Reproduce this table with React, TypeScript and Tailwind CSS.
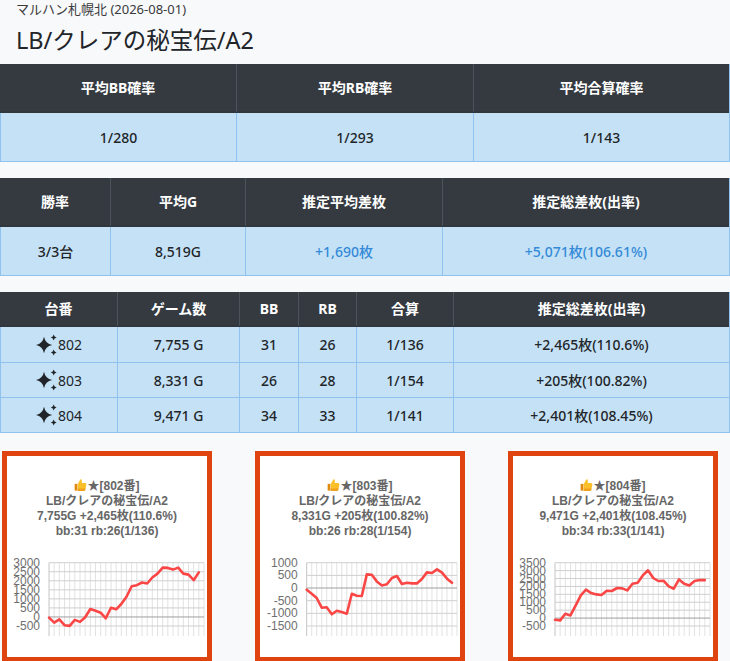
import React from 'react'

type Machine = {
  no: string
  games: string
  bb: number
  rb: number
  total: string
  diff: string
  g: string
  chartDiff: string
  top: number
  bottom: number
  left: number
  data: number[]
}

const MACHINES: Machine[] = [
  {
    no: '802', games: '7,755 G', bb: 31, rb: 26, total: '1/136', diff: '+2,465枚(110.6%)',
    g: '7,755G', chartDiff: '+2,465枚(110.6%)', top: 3000, bottom: -500, left: 42,
    data: [-37, -311, -128, -458, -494, -165, -275, -18, 440, 348, 238, -73, 513, 421, 714, 1117, 1703, 1758, 1905, 1850, 2179, 2399, 2729, 2711, 2619, 2729, 2399, 2344, 2033, 2465],
  },
  {
    no: '803', games: '8,331 G', bb: 26, rb: 28, total: '1/154', diff: '+205枚(100.82%)',
    g: '8,331G', chartDiff: '+205枚(100.82%)', top: 1000, bottom: -1500, left: 46.7,
    data: [-66, -224, -395, -776, -763, -1039, -895, -947, -1013, -224, -303, -316, 539, 526, 263, 105, 145, 395, 474, 158, 211, 184, 184, 355, 618, 592, 737, 605, 368, 205],
  },
  {
    no: '804', games: '9,471 G', bb: 34, rb: 33, total: '1/141', diff: '+2,401枚(108.45%)',
    g: '9,471G', chartDiff: '+2,401枚(108.45%)', top: 3500, bottom: -500, left: 42,
    data: [-105, -148, 274, 169, 802, 1435, 1793, 1582, 1498, 1456, 1730, 1709, 1899, 1878, 1751, 2173, 2236, 2700, 3017, 2532, 2342, 2363, 2004, 1857, 2447, 2173, 2068, 2342, 2405, 2401],
  },
]

function Sparkles() {
  return (
    <svg width="21" height="22" viewBox="0 0 21 22" className="shrink-0">
      <path d="M8 2.8Q9.3 9.7 16.2 11Q9.3 12.3 8 19.2Q6.7 12.3 -0.2 11Q6.7 9.7 8 2.8Z" fill="#212529" />
      <path d="M17.7 0.6Q18.1 3.1 20.6 3.5Q18.1 3.9 17.7 6.4Q17.3 3.9 14.8 3.5Q17.3 3.1 17.7 0.6Z" fill="#212529" />
      <path d="M17.7 15.6Q18.1 18.1 20.6 18.5Q18.1 18.9 17.7 21.4Q17.3 18.9 14.8 18.5Q17.3 18.1 17.7 15.6Z" fill="#212529" />
    </svg>
  )
}

function ThumbsUp() {
  return (
    <svg width="13" height="13" viewBox="0 0 16 16" className="inline-block align-[-1px]">
      <path d="M0.8 7.2h3.4v8.3H0.8z" fill="#e08a12" />
      <path d="M4.6 7.4 7.6 2.1c.5-.9 2-.6 2 .6v3.4h4.1c1 0 1.7.9 1.5 1.8l-1.1 6c-.2.9-.9 1.5-1.8 1.5H4.6z" fill="#fbbf2a" />
      <path d="M4.6 13h9.6l-.3 1.4c-.2.9-.9 1.5-1.8 1.5H4.6z" fill="#f0a21c" />
    </svg>
  )
}

function Chart({ m }: { m: Machine }) {
  const yTop = 23.7
  const yBot = 87
  const gridBottom = 97
  const right = 197
  const dx = (right - m.left) / 30
  const y = (v: number) => yTop + ((m.top - v) / (m.top - m.bottom)) * (yBot - yTop)
  const levels: number[] = []
  for (let v = m.top; v >= m.bottom; v -= 500) levels.push(v)
  const pts = m.data.map((v, i) => `${(m.left + i * dx).toFixed(1)},${y(v).toFixed(1)}`).join(' ')
  return (
    <svg width="200" height="119" viewBox="0 0 200 119" className="block">
      {Array.from({ length: 31 }, (_, i) => (
        <line key={i} x1={m.left + i * dx} x2={m.left + i * dx} y1={yTop} y2={gridBottom} stroke={i === 0 ? '#c4c4c4' : '#e2e2e2'} strokeWidth="1" />
      ))}
      {levels.map(v => (
        <line key={v} x1={m.left} x2={right} y1={y(v)} y2={y(v)} stroke={v === 0 ? '#9e9e9e' : '#cfcfcf'} strokeWidth="1" />
      ))}
      {levels.map(v => (
        <text key={v} x={m.left - 9} y={y(v)} textAnchor="end" dominantBaseline="central" fontSize="12" fill="#6f6f6f" fontFamily="'Liberation Sans', Arial, sans-serif">
          {v}
        </text>
      ))}
      <polyline points={pts} fill="none" stroke="#fb4646" strokeWidth="2.6" strokeLinejoin="round" strokeLinecap="round" />
    </svg>
  )
}

function ChartCard({ m }: { m: Machine }) {
  return (
    <div className="w-[210px] h-[211px] border-[5px] border-[#df4410] bg-white shrink-0">
      <div className="pt-[22px] text-center text-[12px] leading-[15px] font-bold text-[#666] font-['Liberation_Sans','Noto_Sans_CJK_JP',sans-serif]">
        <p><ThumbsUp />★[{m.no}番]</p>
        <p>LB/クレアの秘宝伝/A2</p>
        <p>{m.g} {m.chartDiff}</p>
        <p>bb:{m.bb} rb:{m.rb}({m.total})</p>
      </div>
      <Chart m={m} />
    </div>
  )
}

const headCell = 'flex items-center justify-center bg-[#343a40] text-white font-bold border-l border-[#4b535b] first:border-l-0'
const bodyCell = 'flex items-center justify-center bg-[#c5e1f5] font-medium border-l border-[#8fc2ee]'
const dark = 'text-[#212529]'
const blue = 'text-[#338ad8]'

export default function App() {
  return (
    <div className="min-h-[661px] bg-[#f8f9fa] font-['Noto_Sans','Noto_Sans_CJK_JP',sans-serif] text-[14px] overflow-hidden">
      <p className="pt-[1px] pl-4 text-[13px] leading-[16px] text-[#3a3a3a]">マルハン札幌北 (2026-08-01)</p>
      <h1 className="mt-[7px] pl-4 text-[23.5px] leading-[32px] text-[#212529]">LB/クレアの秘宝伝/A2</h1>

      <div className="mt-[8px] grid grid-cols-[236px_237px_1fr] border-b border-r border-[#8fc2ee]">
        {['平均BB確率', '平均RB確率', '平均合算確率'].map(h => (
          <div key={h} className={`${headCell} h-[49px] border-b-2 border-b-[#30363b]`}>{h}</div>
        ))}
        {['1/280', '1/293', '1/143'].map(v => (
          <div key={v} className={`${bodyCell} ${dark} h-[48px]`}>{v}</div>
        ))}
      </div>

      <div className="mt-[16px] grid grid-cols-[110px_135px_197px_1fr] border-b border-r border-[#8fc2ee]">
        {['勝率', '平均G', '推定平均差枚', '推定総差枚(出率)'].map(h => (
          <div key={h} className={`${headCell} h-[49px] border-b-2 border-b-[#30363b]`}>{h}</div>
        ))}
        <div className={`${bodyCell} ${dark} h-[48px]`}>3/3台</div>
        <div className={`${bodyCell} ${dark} h-[48px]`}>8,519G</div>
        <div className={`${bodyCell} ${blue} h-[48px]`}>+1,690枚</div>
        <div className={`${bodyCell} ${blue} h-[48px]`}>+5,071枚(106.61%)</div>
      </div>

      <div className="mt-[16px] grid grid-cols-[117px_122px_59px_58px_97px_1fr] border-b border-r border-[#8fc2ee]">
        {['台番', 'ゲーム数', 'BB', 'RB', '合算', '推定総差枚(出率)'].map(h => (
          <div key={h} className={`${headCell} h-[35px] border-b-2 border-b-[#30363b]`}>{h}</div>
        ))}
        {MACHINES.map((m, i) => {
          const cell = `${bodyCell} ${dark} h-[35px] ${i > 0 ? 'border-t' : ''}`
          return (
            <React.Fragment key={m.no}>
              <div className={`${cell} gap-[1px]`}>
                <Sparkles />
                <span className="font-normal">{m.no}</span>
              </div>
              <div className={cell}>{m.games}</div>
              <div className={cell}>{m.bb}</div>
              <div className={cell}>{m.rb}</div>
              <div className={cell}>{m.total}</div>
              <div className={cell}>{m.diff}</div>
            </React.Fragment>
          )
        })}
      </div>

      <div className="mt-[18px] pl-[2px] flex gap-[43px]">
        {MACHINES.map(m => (
          <ChartCard key={m.no} m={m} />
        ))}
      </div>
    </div>
  )
}
